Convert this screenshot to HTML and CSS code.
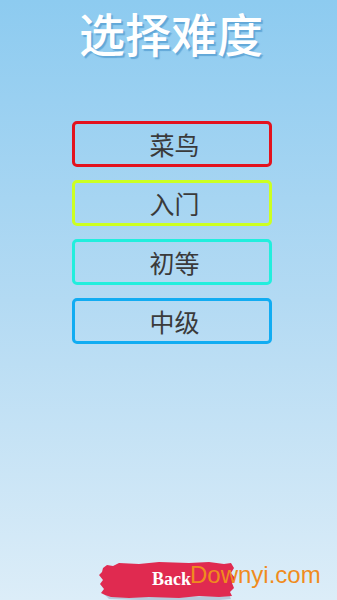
FILE: index.html
```html
<!DOCTYPE html>
<html>
<head>
<meta charset="utf-8">
<link rel="stylesheet" href="styles.css">
</head>
<body>
<div class="screen">
  <h1 class="title">选择难度</h1>
  <div class="levels">
    <div class="level red">菜鸟</div>
    <div class="level lime">入门</div>
    <div class="level cyan">初等</div>
    <div class="level blue">中级</div>
  </div>
  <div class="footer">
    <div class="back">
      <svg class="brush" width="140" height="40" viewBox="0 0 140 40">
        <path d="M6 33 L10 37 L40 38 L80 39 L120 38 L132 37 L130 32 L128 34 L60 35 Z" fill="#9fb1c8" opacity="0.6"/>
        <path d="M4 6 L8 3 L14 4 L20 1 L40 2 L60 0 L90 1 L110 0 L125 2 L132 1 L135 6 L132 11 L136 16 L133 21 L135 26 L131 30 L133 34 L120 35 L100 34 L80 36 L50 35 L30 36 L12 35 L6 33 L2 31 L5 27 L1 22 L4 18 L0 13 L3 10 Z" fill="#e02a50"/>
      </svg>
      <span class="back-label">Back</span>
    </div>
    <span class="watermark">Downyi.com</span>
  </div>
</div>
</body>
</html>
```
FILE: styles.css
```css
html, body {
  margin: 0;
  padding: 0;
}
.screen {
  width: 337px;
  height: 600px;
  background: linear-gradient(to bottom, #8dcbf0 0%, #b3daf3 50%, #dcedf8 100%);
  display: flex;
  flex-direction: column;
  align-items: center;
  overflow: hidden;
  position: relative;
  font-family: "Noto Sans CJK SC", "Noto Sans", sans-serif;
}
.title {
  margin: 0;
  padding-top: 7px;
  padding-left: 5px;
  font-size: 46px;
  line-height: 50px;
  font-weight: 500;
  color: #ffffff;
  text-shadow: 2px 2px 1px #62a8d8;
}
.levels {
  margin-top: 64px;
  margin-left: 6px;
  display: flex;
  flex-direction: column;
  gap: 13px;
}
.level {
  box-sizing: border-box;
  width: 200px;
  height: 46px;
  border: 3px solid;
  border-radius: 5px;
  display: flex;
  align-items: center;
  justify-content: center;
  font-size: 25px;
  color: #3a3a3a;
  padding-left: 6px;
}
.red { border-color: #e3121e; }
.lime { border-color: #ccff22; }
.cyan { border-color: #22eedd; }
.blue { border-color: #11acf2; }
.footer {
  margin-top: auto;
  width: 100%;
  height: 40px;
  position: relative;
}
.back {
  position: absolute;
  left: 99px;
  top: 2px;
  width: 140px;
  height: 40px;
}
.brush {
  position: absolute;
  left: 0;
  top: 0;
}
.back-label {
  position: absolute;
  left: 53px;
  top: 7px;
  font-family: "Liberation Serif", "DejaVu Serif", serif;
  font-weight: 700;
  font-size: 18px;
  color: #ffffff;
}
.watermark {
  position: absolute;
  left: 190px;
  top: 1px;
  font-family: "Liberation Sans", Arial, sans-serif;
  font-size: 24px;
  color: #f08c1e;
}
```
